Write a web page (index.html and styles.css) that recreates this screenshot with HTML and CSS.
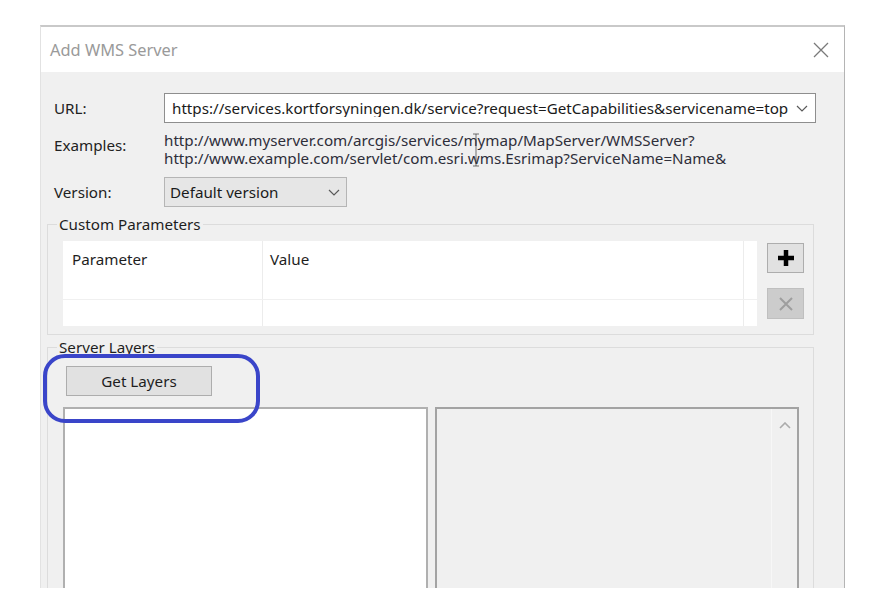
FILE: index.html
```html
<!DOCTYPE html>
<html>
<head>
<meta charset="utf-8">
<title>Add WMS Server</title>
<link rel="stylesheet" href="styles.css">
</head>
<body>
<div class="page">
  <div class="dialog">
    <div class="titlebar">
      <span class="title">Add WMS Server</span>
      <svg class="close" width="16" height="16" viewBox="0 0 16 16"><path d="M1 1L15 15M15 1L1 15" stroke="#7a7a7a" stroke-width="1.3" fill="none"/></svg>
    </div>
    <div class="body">
      <div class="row row-url">
        <label class="lbl">URL:</label>
        <div class="combo combo-url">
          <span class="combo-text">https://services.kortforsyningen.dk/service?request=GetCapabilities&amp;servicename=top</span>
          <svg class="chev" width="12" height="7" viewBox="0 0 12 7"><path d="M1 1L6 6L11 1" stroke="#5a5a5a" stroke-width="1.2" fill="none"/></svg>
        </div>
      </div>
      <div class="row row-ex">
        <label class="lbl lbl-ex">Examples:</label>
        <div class="examples">http://www.myserver.com/arcgis/services/mymap/MapServer/WMSServer?<br>http://www.example.com/servlet/com.esri.wms.Esrimap?ServiceName=Name&amp;</div>
      </div>
      <div class="row row-ver">
        <label class="lbl">Version:</label>
        <div class="combo combo-ver">
          <span class="combo-text">Default version</span>
          <svg class="chev" width="12" height="7" viewBox="0 0 12 7"><path d="M1 1L6 6L11 1" stroke="#5a5a5a" stroke-width="1.2" fill="none"/></svg>
        </div>
      </div>

      <fieldset class="group group-params">
        <legend>Custom Parameters</legend>
        <div class="params">
          <div class="grid">
            <div class="grid-head">
              <div class="cell c-param">Parameter</div>
              <div class="cell c-value">Value</div>
              <div class="cell c-rest"></div>
            </div>
            <div class="grid-row r1">
              <div class="cell c-param"></div>
              <div class="cell c-value"></div>
              <div class="cell c-rest"></div>
            </div>
            <div class="grid-row r2">
              <div class="cell c-param"></div>
              <div class="cell c-value"></div>
              <div class="cell c-rest"></div>
            </div>
          </div>
          <div class="side-btns">
            <div class="sq-btn add">
              <svg width="20" height="20" viewBox="0 0 20 20"><path d="M10 2V18M2 10H18" stroke="#000" stroke-width="4.5" fill="none"/></svg>
            </div>
            <div class="sq-btn remove">
              <svg width="16" height="16" viewBox="0 0 16 16"><path d="M2 2L14 14M14 2L2 14" stroke="#9e9e9e" stroke-width="2" fill="none"/></svg>
            </div>
          </div>
        </div>
      </fieldset>

      <fieldset class="group group-layers">
        <legend>Server Layers</legend>
        <div class="layers">
          <div class="btn get-layers">Get Layers</div>
          <div class="lists">
            <div class="list list-left"></div>
            <div class="list list-right">
              <div class="scroll">
                <svg width="12" height="7" viewBox="0 0 12 7"><path d="M1 6L6 1L11 6" stroke="#ababab" stroke-width="1.6" fill="none"/></svg>
              </div>
            </div>
          </div>
        </div>
      </fieldset>
    </div>
    <div class="annotation"></div>
    <svg class="ibeam" width="10" height="34" viewBox="0 0 10 34"><path d="M2 1H8M5 1V33M2 33H8" stroke="#444" stroke-width="1" fill="none" opacity="0.75"/></svg>
  </div>
</div>
</body>
</html>
```

FILE: styles.css
```css
* { box-sizing: border-box; }

html, body {
  margin: 0;
  padding: 0;
  background: #ffffff;
}

body {
  font-family: "Noto Sans", "Open Sans", sans-serif;
  font-size: 15.2px;
  line-height: 18px;
  color: #1e1e1e;
}

.page {
  padding: 25px 0 0 40px;
}

.dialog {
  position: relative;
  width: 805px;
  height: 563px;
  overflow: hidden;
  border-top: 2px solid #c9c9c9;
  border-right: 1px solid #b4b4b4;
  border-left: 1px solid #e2e2e2;
  background: #f0f0f0;
}

.titlebar {
  height: 45px;
  background: #ffffff;
  display: flex;
  align-items: center;
  justify-content: space-between;
  padding: 0 15px 0 9px;
}

.title {
  font-size: 16.4px;
  color: #9a9a9a;
}

.close {
  display: block;
}

.body {
  padding: 21px 30px 0 6px;
}

.row {
  display: flex;
  padding-left: 7px;
}

.lbl {
  width: 110px;
  flex: none;
  color: #222;
}

.row-url {
  align-items: center;
  margin-right: -2px;
}

.combo {
  display: flex;
  align-items: center;
  justify-content: space-between;
  height: 30px;
  border: 1px solid #8e8e8e;
  background: #fff;
  padding: 0 7px 0 7px;
  overflow: hidden;
}

.combo-url {
  flex: 1;
}

.combo-text {
  white-space: nowrap;
  overflow: hidden;
  flex: 1;
  margin-right: 8px;
  color: #1a1a1a;
}

.chev {
  flex: none;
  display: block;
}

.row-ex {
  margin-top: 8px;
}

.lbl-ex {
  padding-top: 5px;
}

.examples {
  line-height: 18px;
  color: #2e2e3a;
  white-space: nowrap;
}

.row-ver {
  margin-top: 10px;
  align-items: center;
}

.combo-ver {
  width: 183px;
  height: 30px;
  background: #e6e6e6;
  border: 1px solid #b5b5b5;
  padding: 0 6px 0 5px;
}

.group {
  margin: 0;
  padding: 0;
  min-inline-size: 0;
  border: 1px solid #dcdcdc;
}

.group legend {
  margin-left: 9px;
  padding: 0 2px;
  line-height: 16px;
  font-size: 15.2px;
  color: #1e1e1e;
}

.group-params {
  margin-top: 9px;
}

.params {
  display: flex;
  gap: 10px;
  padding: 9px 9px 8px 15px;
}

.grid {
  width: 694px;
  height: 85px;
  background: #fff;
  flex: none;
}

.grid-head,
.grid-row {
  display: flex;
}

.grid-head { height: 36px; }
.grid-row.r1 { height: 23px; border-bottom: 1px solid #f0f0f0; }
.grid-row.r2 { height: 26px; }

.cell {
  height: 100%;
}

.c-param {
  width: 200px;
  border-right: 1px solid #ececec;
  padding: 9px 0 0 9px;
}

.c-value {
  width: 481px;
  border-right: 1px solid #ececec;
  padding: 9px 0 0 7px;
}

.c-rest {
  flex: 1;
}

.side-btns {
  display: flex;
  flex-direction: column;
  gap: 15px;
  padding-top: 2px;
}

.sq-btn {
  width: 37px;
  height: 30px;
  display: flex;
  align-items: center;
  justify-content: center;
  border: 1px solid #adadad;
  background: #e1e1e1;
}

.sq-btn.remove {
  height: 31px;
  background: #cccccc;
  border-color: #bfbfbf;
}

.group-layers {
  margin-top: 4px;
  height: 400px;
}

.layers {
  padding: 11px 14px 0 15px;
}

.btn {
  display: flex;
  align-items: center;
  justify-content: center;
  border: 1px solid #adadad;
  background: #e1e1e1;
  color: #1e1e1e;
}

.get-layers {
  width: 146px;
  height: 30px;
  margin-left: 3px;
}

.lists {
  display: flex;
  gap: 7px;
  margin-top: 11px;
}

.list {
  height: 260px;
  border: 1px solid #a3a3a3;
  border-width: 2px 2px 0 2px;
}

.list-left {
  width: 365px;
  background: #fff;
  border-color: #b0b0b0;
}

.list-right {
  width: 364px;
  background: #f0f0f0;
  display: flex;
  justify-content: flex-end;
}

.scroll {
  width: 26px;
  border-left: 1px solid #f7f7f7;
  background: #f0f0f0;
  display: flex;
  justify-content: center;
  padding-top: 13px;
}

.scroll svg {
  display: block;
}

.annotation {
  position: absolute;
  left: 2px;
  top: 327px;
  width: 217px;
  height: 69px;
  border: 4px solid #3a45c9;
  border-radius: 22px;
}

.ibeam {
  position: absolute;
  left: 430px;
  top: 106px;
}
```
